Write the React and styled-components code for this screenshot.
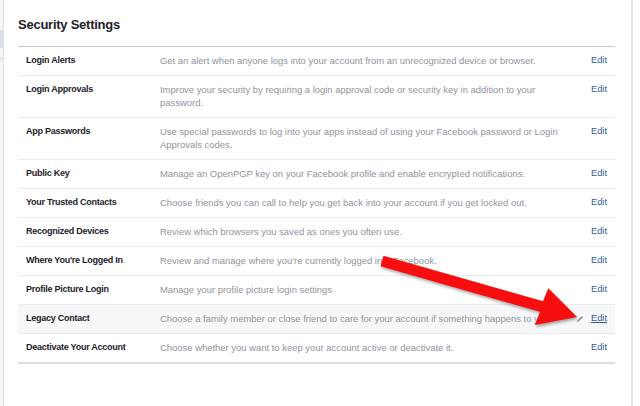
import React from "react";
import styled, { createGlobalStyle } from "styled-components";

const GlobalStyle = createGlobalStyle`
  html, body {
    margin: 0;
    padding: 0;
    background: #fff;
  }
  body {
    font-family: "Liberation Sans", Arial, Helvetica, sans-serif;
    -webkit-font-smoothing: antialiased;
  }
`;

const settings = [
  {
    label: "Login Alerts",
    text: "Get an alert when anyone logs into your account from an unrecognized device or browser.",
  },
  {
    label: "Login Approvals",
    text: "Improve your security by requiring a login approval code or security key in addition to your password.",
  },
  {
    label: "App Passwords",
    text: "Use special passwords to log into your apps instead of using your Facebook password or Login Approvals codes.",
  },
  {
    label: "Public Key",
    text: "Manage an OpenPGP key on your Facebook profile and enable encrypted notifications.",
  },
  {
    label: "Your Trusted Contacts",
    text: "Choose friends you can call to help you get back into your account if you get locked out.",
  },
  {
    label: "Recognized Devices",
    text: "Review which browsers you saved as ones you often use.",
  },
  {
    label: "Where You're Logged In",
    text: "Review and manage where you're currently logged into Facebook.",
  },
  {
    label: "Profile Picture Login",
    text: "Manage your profile picture login settings",
  },
  {
    label: "Legacy Contact",
    text: "Choose a family member or close friend to care for your account if something happens to you.",
    hovered: true,
  },
  {
    label: "Deactivate Your Account",
    text: "Choose whether you want to keep your account active or deactivate it.",
  },
];

const Page = styled.div`
  position: relative;
  display: flex;
  width: 640px;
  height: 406px;
  overflow: hidden;
  background: #fff;
`;

const LeftNav = styled.div`
  width: 3px;
  flex-shrink: 0;
  background: #f4f5f7;
  display: flex;
  flex-direction: column;
`;

const NavItem = styled.div`
  margin-top: 30px;
  height: 18px;
  background: #d9e0ec;
`;

const NavDivider = styled.div`
  margin-top: 10px;
  height: 1px;
  background: #dddfe2;
`;

const Card = styled.div`
  flex: 1;
  border-left: 1px solid #dddfe2;
  border-right: 2px solid #e3e5e8;
  margin-right: 7px;
  padding: 17px 16px 0 14px;
  background: #fff;
`;

const Title = styled.h2`
  margin: 0 0 13px;
  font-size: 13px;
  line-height: 16px;
  font-weight: bold;
  letter-spacing: -0.25px;
  color: #1d2129;
`;

const Table = styled.div`
  border-top: 1px solid #c5c8cd;
  border-bottom: 2px solid #dcdee2;
`;

const Row = styled.div`
  display: grid;
  grid-template-columns: 134px 408px 1fr;
  padding: 7px 8px 8px;
  background: ${(p) => (p.$hovered ? "#f6f7f9" : "#fff")};
  border-bottom: 1px solid #e9ebee;
  font-size: 9.45px;
  line-height: 13px;

  &:last-child {
    border-bottom: none;
  }
`;

const Label = styled.div`
  font-size: 9px;
  font-weight: bold;
  letter-spacing: -0.25px;
  color: #1d2129;
`;

const Description = styled.div`
  color: #90949c;
`;

const EditCell = styled.div`
  display: flex;
  justify-content: flex-end;
  align-items: flex-start;
  gap: 7px;
`;

const EditLink = styled.a`
  color: #365899;
  font-size: 9.3px;
  text-decoration: ${(p) => (p.$hovered ? "underline" : "none")};
  cursor: pointer;
`;

const Pencil = styled.svg`
  width: 8px;
  height: 8px;
  margin-top: 3px;
`;

const ArrowLayer = styled.svg`
  position: absolute;
  left: 0;
  top: 0;
  width: 640px;
  height: 406px;
  pointer-events: none;
  filter: drop-shadow(1px 2px 1.5px rgba(0, 0, 0, 0.35));
`;

const PencilIcon = () => (
  <Pencil viewBox="0 0 8 8">
    <path d="M1 7 L1.4 5.4 L5.8 1 L7 2.2 L2.6 6.6 Z" fill="#90949c" />
  </Pencil>
);

const App = () => {
  return (
    <>
      <GlobalStyle />
      <Page>
        <LeftNav>
          <NavItem />
          <NavDivider />
        </LeftNav>
        <Card>
          <Title>Security Settings</Title>
          <Table>
            {settings.map((s) => (
              <Row key={s.label} $hovered={s.hovered}>
                <Label>{s.label}</Label>
                <Description>{s.text}</Description>
                <EditCell>
                  {s.hovered && <PencilIcon />}
                  <EditLink $hovered={s.hovered}>Edit</EditLink>
                </EditCell>
              </Row>
            ))}
          </Table>
        </Card>
        <ArrowLayer viewBox="0 0 640 406">
          <polygon
            points="383.5,255.7 543,301.2 548.3,288.3 577,317 535,325 540,311.8 380.5,266.3"
            fill="#f70f0f"
          />
        </ArrowLayer>
      </Page>
    </>
  );
};

export default App;
